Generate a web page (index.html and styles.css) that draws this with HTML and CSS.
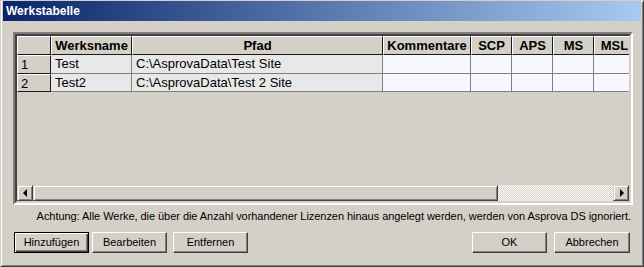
FILE: index.html
```html
<!DOCTYPE html>
<html lang="de">
<head>
<meta charset="utf-8">
<title>Werkstabelle</title>
<link rel="stylesheet" href="styles.css">
</head>
<body>
<div class="window">
  <div class="titlebar">Werkstabelle</div>
  <div class="grid-frame">
    <div class="grid-inner">
      <div class="sheet">
        <div class="sheet-grid">
          <div class="hd corner"></div>
          <div class="hd">Werksname</div>
          <div class="hd">Pfad</div>
          <div class="hd">Kommentare</div>
          <div class="hd">SCP</div>
          <div class="hd">APS</div>
          <div class="hd">MS</div>
          <div class="hd">MSL</div>

          <div class="rh">1</div>
          <div class="cell ro">Test</div>
          <div class="cell ro">C:\AsprovaData\Test Site</div>
          <div class="cell ed"></div>
          <div class="cell ed"></div>
          <div class="cell ed"></div>
          <div class="cell ed"></div>
          <div class="cell ed"></div>

          <div class="rh">2</div>
          <div class="cell ro">Test2</div>
          <div class="cell ro">C:\AsprovaData\Test 2 Site</div>
          <div class="cell ed"></div>
          <div class="cell ed"></div>
          <div class="cell ed"></div>
          <div class="cell ed"></div>
          <div class="cell ed"></div>
        </div>
      </div>
      <div class="hscroll">
        <div class="sb-btn"><span class="arrow-left"></span></div>
        <div class="sb-thumb"></div>
        <div class="sb-track"></div>
        <div class="sb-btn"><span class="arrow-right"></span></div>
      </div>
    </div>
  </div>
  <div class="notice">Achtung: Alle Werke, die über die Anzahl vorhandener Lizenzen hinaus angelegt werden, werden von Asprova DS ignoriert.</div>
  <div class="buttons">
    <div class="btn default">Hinzufügen</div>
    <div class="btn b2">Bearbeiten</div>
    <div class="btn b3">Entfernen</div>
    <div class="spacer"></div>
    <div class="btn">OK</div>
    <div class="btn b5">Abbrechen</div>
  </div>
</div>
</body>
</html>
```
FILE: styles.css
```css
* { box-sizing: border-box; }
html, body { margin: 0; padding: 0; }
body {
  width: 644px;
  height: 267px;
  overflow: hidden;
  background: #d4d0c8;
  font-family: "Liberation Sans", Arial, sans-serif;
}
.window {
  width: 644px;
  height: 267px;
  background: #d4d0c8;
  border-top: 1px solid #d4d0c8;
  border-left: 1px solid #d4d0c8;
  border-right: 1px solid #404040;
  border-bottom: 1px solid #404040;
  box-shadow: inset 1px 1px #ffffff, inset -1px -1px #808080;
  padding: 0 2px 2px 2px;
}
.titlebar {
  height: 20px;
  background: linear-gradient(to right, #0a246a, #a6caf0);
  color: #fff;
  font-weight: bold;
  font-size: 12px;
  line-height: 20px;
  padding-left: 3px;
}
.grid-frame {
  margin: 11px 8px 0 10px;
  width: 620px;
  height: 173px;
  border: 2px solid;
  border-color: #808080 #ffffff #ffffff #808080;
}
.grid-inner {
  height: 100%;
  border: 2px solid;
  border-color: #404040 #d4d0c8 #d4d0c8 #404040;
  display: flex;
  flex-direction: column;
}
.sheet {
  flex: 1;
  overflow: hidden;
  background: #d4d0c8;
}
.sheet-grid {
  display: grid;
  grid-template-columns: 34px 81px 251px 88px 41px 41px 41px 41px;
  grid-template-rows: 19px 19px 18px;
  width: 618px;
  font-size: 13px;
  color: #000;
}
.hd, .rh {
  background: #d4d0c8;
  border-top: 1px solid #ffffff;
  border-left: 1px solid #ffffff;
  border-right: 1px solid #1a1a1a;
  border-bottom: 1px solid #1a1a1a;
  white-space: nowrap;
  overflow: hidden;
}
.hd {
  font-weight: bold;
  text-align: center;
  line-height: 17px;
}
.rh {
  padding-left: 3px;
  line-height: 17px;
}
.cell {
  border-right: 1px solid #808080;
  border-bottom: 1px solid #808080;
  padding-left: 4px;
  line-height: 18px;
  white-space: nowrap;
  overflow: hidden;
}
.cell.ro { background: #e8e8e8; }
.cell.ed { background: #f7f7ff; }
.hscroll {
  height: 16px;
  display: flex;
}
.sb-btn {
  width: 16px;
  height: 16px;
  background: #d4d0c8;
  border: 1px solid;
  border-color: #d4d0c8 #404040 #404040 #d4d0c8;
  box-shadow: inset 1px 1px #ffffff, inset -1px -1px #808080;
  display: flex;
  align-items: center;
  justify-content: center;
}
.arrow-left {
  width: 0; height: 0;
  border-top: 4px solid transparent;
  border-bottom: 4px solid transparent;
  border-right: 4px solid #000;
  margin-left: -1px;
}
.arrow-right {
  width: 0; height: 0;
  border-top: 4px solid transparent;
  border-bottom: 4px solid transparent;
  border-left: 4px solid #000;
  margin-left: 1px;
}
.sb-thumb {
  width: 465px;
  height: 16px;
  background: #d4d0c8;
  border: 1px solid;
  border-color: #d4d0c8 #404040 #404040 #d4d0c8;
  box-shadow: inset 1px 1px #ffffff, inset -1px -1px #808080;
}
.sb-track {
  flex: 1;
  background-image: repeating-conic-gradient(#ffffff 0 25%, #d4d0c8 0 50%);
  background-size: 2px 2px;
}
.notice {
  margin: 3px 10px 0 0;
  height: 16px;
  font-size: 11px;
  line-height: 16px;
  letter-spacing: -0.05px;
  text-align: right;
  color: #000;
  white-space: nowrap;
}
.buttons {
  display: flex;
  margin: 8px 11px 0 11px;
}
.spacer { flex: 1; }
.btn {
  width: 75px;
  height: 21px;
  background: #d4d0c8;
  border: 1px solid;
  border-color: #ffffff #404040 #404040 #ffffff;
  box-shadow: inset -1px -1px #808080;
  font-size: 11px;
  line-height: 19px;
  text-align: center;
  color: #000;
}
.btn.default {
  border: 1px solid #000;
  box-shadow: inset 1px 1px #ffffff, inset -1px -1px #404040, inset -2px -2px #808080;
}
.btn.b2 { margin-left: 3px; }
.btn.b3 { margin-left: 6px; }
.btn.b5 { margin-left: 7px; width: 76px; }
```
